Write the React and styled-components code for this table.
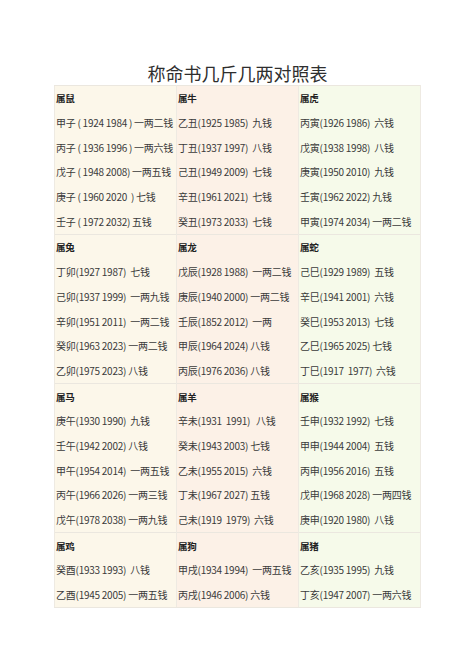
import React from "react";
import styled, { createGlobalStyle } from "styled-components";

const groups = [
  {
    heads: ["属鼠", "属牛", "属虎"],
    rows: [
      ["甲子 ( 1924 1984 ) 一两二钱", "乙丑(1925 1985)  九钱", "丙寅(1926 1986)  六钱"],
      ["丙子 ( 1936 1996 ) 一两六钱", "丁丑(1937 1997)  八钱", "戊寅(1938 1998)  八钱"],
      ["戊子 ( 1948 2008) 一两五钱", "己丑(1949 2009)  七钱", "庚寅(1950 2010)  九钱"],
      ["庚子 ( 1960 2020  ) 七钱", "辛丑(1961 2021)  七钱", "壬寅(1962 2022) 九钱"],
      ["壬子 ( 1972 2032) 五钱", "癸丑(1973 2033)  七钱", "甲寅(1974 2034) 一两二钱"],
    ],
  },
  {
    heads: ["属兔", "属龙", "属蛇"],
    rows: [
      ["丁卯(1927 1987)  七钱", "戊辰(1928 1988)  一两二钱", "己巳(1929 1989)  五钱"],
      ["己卯(1937 1999)  一两九钱", "庚辰(1940 2000) 一两二钱", "辛巳(1941 2001)  六钱"],
      ["辛卯(1951 2011)  一两二钱", "壬辰(1852 2012)  一两", "癸巳(1953 2013)  七钱"],
      ["癸卯(1963 2023) 一两二钱", "甲辰(1964 2024) 八钱", "乙巳(1965 2025) 七钱"],
      ["乙卯(1975 2023) 八钱", "丙辰(1976 2036) 八钱", "丁巳(1917  1977)  六钱"],
    ],
  },
  {
    heads: ["属马", "属羊", "属猴"],
    rows: [
      ["庚午(1930 1990)  九钱", "辛未(1931  1991)   八钱", "壬申(1932 1992)  七钱"],
      ["壬午(1942 2002) 八钱", "癸未(1943 2003) 七钱", "甲申(1944 2004)  五钱"],
      ["甲午(1954 2014)  一两五钱", "乙未(1955 2015)  六钱", "丙申(1956 2016)  五钱"],
      ["丙午(1966 2026) 一两三钱", "丁未(1967 2027) 五钱", "戊申(1968 2028) 一两四钱"],
      ["戊午(1978 2038) 一两九钱", "己未(1919  1979)  六钱", "庚申(1920 1980)  八钱"],
    ],
  },
  {
    heads: ["属鸡", "属狗", "属猪"],
    rows: [
      ["癸酉(1933 1993)  八钱", "甲戌(1934 1994)  一两五钱", "乙亥(1935 1995)  九钱"],
      ["乙酉(1945 2005) 一两五钱", "丙戌(1946 2006) 六钱", "丁亥(1947 2007) 一两六钱"],
    ],
  },
];

const tints = ["#fcf7ea", "#fcf1e7", "#f6faea"];

const GlobalStyle = createGlobalStyle`
  html, body {
    margin: 0;
    padding: 0;
    background: #fff;
  }
  body {
    font-family: "Noto Sans CJK SC", "Noto Sans", sans-serif;
    color: #333;
  }
`;

const Page = styled.div`
  width: 475px;
  height: 672px;
  padding-top: 61px;
  box-sizing: border-box;
  display: flex;
  flex-direction: column;
  align-items: center;
`;

const Title = styled.h1`
  margin: 0;
  font-size: 18px;
  line-height: 24px;
  font-weight: 400;
  color: #2e2e2e;
`;

const Table = styled.table`
  border-collapse: collapse;
  table-layout: fixed;
  width: 362px;
`;

const Cell = styled.td`
  width: 120px;
  height: 24.7px;
  padding: 0 0 0 1px;
  background: ${(p) => p.$tint};
  border-left: 1px solid #eeeae2;
  border-right: 1px solid #eeeae2;
  border-top: ${(p) => (p.$head ? "1px solid #ebe7df" : "none")};
  font-size: ${(p) => (p.$head ? "9.5px" : "10px")};
  font-weight: ${(p) => (p.$head ? 700 : 400)};
  color: ${(p) => (p.$head ? "#222" : "#3a3a3a")};
  white-space: pre;
  vertical-align: middle;
  line-height: 12px;
  letter-spacing: -0.25px;
`;

const LastRow = styled.tr`
  td {
    border-bottom: 1px solid #ebe7df;
  }
`;

export default function App() {
  return (
    <>
      <GlobalStyle />
      <Page>
        <Title>称命书几斤几两对照表</Title>
        <Table>
          <tbody>
            {groups.map((g, gi) => (
              <React.Fragment key={gi}>
                <tr>
                  {g.heads.map((h, i) => (
                    <Cell key={i} $head $tint={tints[i]}>
                      {h}
                    </Cell>
                  ))}
                </tr>
                {g.rows.map((r, ri) => {
                  const Row = gi === groups.length - 1 && ri === g.rows.length - 1 ? LastRow : "tr";
                  return (
                    <Row key={ri}>
                      {r.map((c, i) => (
                        <Cell key={i} $tint={tints[i]}>
                          {c}
                        </Cell>
                      ))}
                    </Row>
                  );
                })}
              </React.Fragment>
            ))}
          </tbody>
        </Table>
      </Page>
    </>
  );
}
